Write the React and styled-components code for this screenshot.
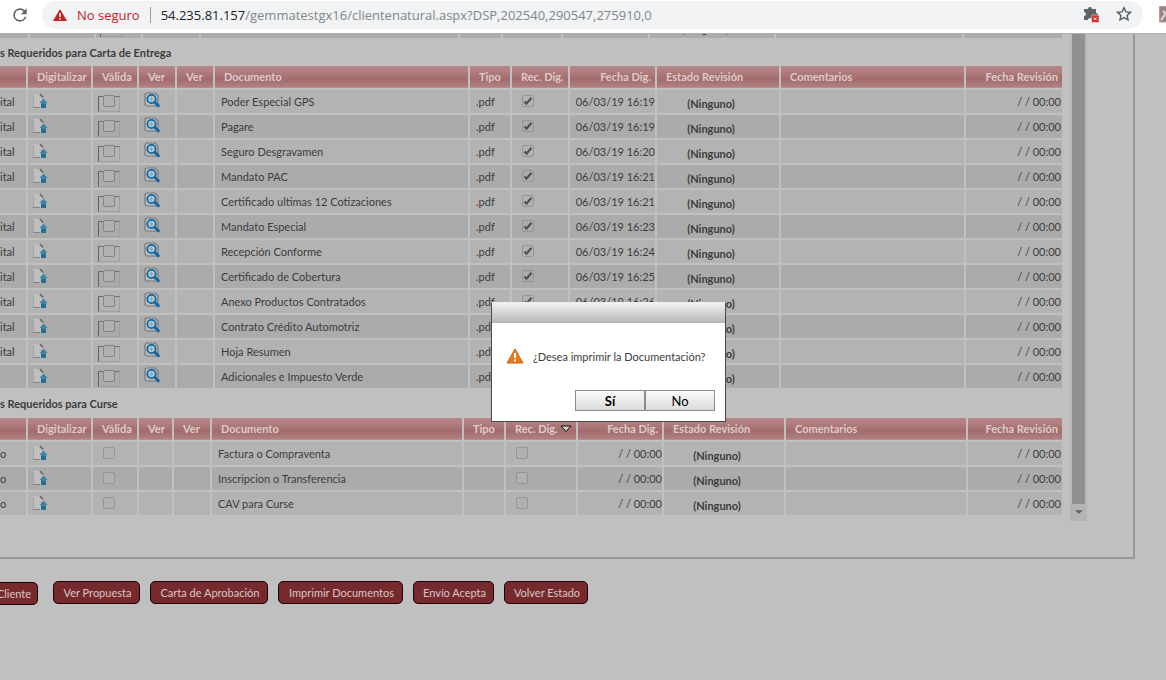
import React from 'react';
import styled, { createGlobalStyle } from 'styled-components';

const Global = createGlobalStyle`
  * { box-sizing: border-box; }
  body { margin: 0; background: #c0c0c0; font-family: Lato, "Open Sans", sans-serif; font-size: 11px; color: #3c3c3c; }
  #root { min-height: 100vh; }
`;

const Shell = styled.div`
  position: relative;
  display: flex;
  flex-direction: column;
  min-height: 100vh;
  overflow: hidden;
`;

const BrowserBar = styled.header`
  display: flex;
  align-items: center;
  flex: none;
  height: 34px;
  padding: 0 0 4px 10px;
  background: #fff;
  border-bottom: 1px solid #b0b0b0;
  overflow: hidden;
  z-index: 1;
`;

const IconButton = styled.button`
  display: flex;
  flex: none;
  padding: 0;
  border: 0;
  background: none;
`;

const AddressBox = styled.div`
  display: flex;
  align-items: center;
  flex: 1;
  min-width: 0;
  height: 28px;
  margin: 0 16px 0 12px;
  padding: 0 11px;
  border-radius: 14px;
  background: #f1f3f4;
  font-family: "Open Sans", "Noto Sans", sans-serif;
  font-size: 13px;
  white-space: nowrap;
`;

const Warning = styled.span`
  margin-left: 10px;
  padding-right: 10px;
  border-right: 1px solid #9a9da0;
  line-height: 16px;
  color: #c5221f;
`;

const Address = styled.a`
  flex: 1;
  margin-left: 10px;
  color: #80868b;
  text-decoration: none;
  overflow: hidden;
  b { font-weight: 400; color: #202124; }
`;

const Tools = styled.div`
  display: flex;
  gap: 16px;
`;

const Panel = styled.main`
  display: flex;
  margin: -19px 31px 0 0;
  padding: 0 46px 36px 0;
  border: solid #989898;
  border-width: 0 2px 2px 0;
`;

const Lists = styled.div`
  flex: 1;
  min-width: 0;
  padding-bottom: 4px;
`;

const ScrollTrack = styled.div`
  display: flex;
  flex-direction: column;
  flex: none;
  width: 17px;
  margin-left: 8px;
  background: #b9b9b9;
`;

const Thumb = styled.div`
  flex: 1;
  margin: 0 2px;
  background: #909090;
`;

const ScrollDown = styled.button`
  display: flex;
  align-items: center;
  justify-content: center;
  height: 17px;
  padding: 0;
  border: 0;
  background: #b4b4b4;
`;

const Title = styled.h2`
  display: flex;
  align-items: center;
  margin: 0;
  height: ${p => p.$h}px;
  font-size: 11px;
  line-height: 16px;
  white-space: nowrap;
`;

const Grid = styled.table`
  width: 100%;
  table-layout: fixed;
  border-collapse: separate;
  border-spacing: 0;
`;

const Head = styled.th`
  height: 24px;
  padding: 0 4px 0 9px;
  border: solid #c0c0c0;
  border-width: 0 2px 2px 0;
  background: linear-gradient(#b58889 0%, #ab7676 40%, #a46b6b 60%, #b08080 95%, #b99b9b 100%);
  color: #dccccc;
  font-size: 11px;
  line-height: 20px;
  text-align: ${p => p.$align || 'left'};
  white-space: nowrap;
  &:last-child { border-right: 0; }
`;

const Row = styled.tr`
  background: ${p => (p.$dark ? '#ababab' : '#b3b3b3')};
`;

const Cell = styled.td`
  height: 25px;
  padding: ${p => p.$pad || '0 0 0 6px'};
  border: solid #c0c0c0;
  border-width: 0 2px 2px 0;
  line-height: 16px;
  text-align: ${p => p.$align || 'left'};
  vertical-align: ${p => p.$v || 'middle'};
  font-weight: ${p => (p.$bold ? 700 : 400)};
  white-space: nowrap;
  overflow: hidden;
  &:last-child { border-right: 0; }
`;

const Tick = styled.input`
  appearance: none;
  display: block;
  width: 12px;
  height: 12px;
  margin: 0;
  border: 1px solid #959595;
  border-radius: 2px;
  background: ${p => (p.checked
    ? `url("data:image/svg+xml,%3Csvg xmlns='http://www.w3.org/2000/svg' viewBox='0 0 10 10'%3E%3Cpath d='M1.5 5.5l2 2.2 5-6' fill='none' stroke='%23505050' stroke-width='2.2'/%3E%3C/svg%3E")`
    : '#b1b1b1')};
`;

const Frame = styled.span`
  display: flex;
  justify-content: center;
  width: 22px;
  height: 16px;
  border: 1px solid #a0a0a0;
  border-left-color: #606060;
  border-top-color: #707070;
  input {
    margin-top: -2px;
    border-color: #858585;
  }
`;

const Actions = styled.nav`
  display: flex;
  gap: 10px;
  padding-top: 22px;
`;

const Action = styled.button`
  flex: none;
  width: ${p => p.$w}px;
  height: 23px;
  padding: 0 0 0 2px;
  border: 1px solid #1c0508;
  border-radius: 5px;
  background: #762a2d;
  color: #d8c6c6;
  font: inherit;
  line-height: 20px;
  white-space: nowrap;
  &:first-child { margin: 1px 5px 0 -12px; }
`;

const Dialog = styled.section`
  position: absolute;
  top: 302px;
  left: calc(50% - 92px);
  width: 235px;
  height: 120px;
  border: 1px solid #4a4a4a;
  border-top-color: #eee;
  background: #fff;
`;

const DialogBar = styled.div`
  height: 20px;
  background: linear-gradient(#f2f2f2, #b6b6b6);
`;

const Message = styled.p`
  display: flex;
  align-items: center;
  gap: 9px;
  margin: 22px 0 0 14px;
  height: 22px;
  white-space: nowrap;
`;

const Choices = styled.div`
  display: flex;
  justify-content: flex-end;
  margin: 23px 10px 0 0;
`;

const Choice = styled.button`
  width: 70px;
  height: 21px;
  padding: 0;
  border: 1px solid #8c8c8c;
  background: linear-gradient(#fafafa, #dcdcdc);
  font: inherit;
  font-size: 13px;
  font-weight: ${p => (p.$main ? 700 : 400)};
  line-height: 18px;
  color: #000;
`;

const Upload = () => (
  <svg width="16" height="16" viewBox="0 0 16 16" aria-label="Digitalizar">
    <path d="M0 1h7l3 4v10H0z" fill="#bfbfbf" />
    <path d="M0 14.500h7" stroke="#858585" />
    <path d="M0.500 2v12" stroke="#a6a6a6" />
    <path d="M7 1l3 3.500" stroke="#6a6a6a" strokeWidth="1.800" />
    <path d="M10.500 5.500l4 4.500h-1.500v5h-5v-5H6.500z" fill="#3d86a4" />
    <path d="M8 11h5v4H8z" fill="#246f92" />
  </svg>
);

const Search = () => (
  <svg width="16" height="16" viewBox="0 0 16 16" aria-label="Ver">
    <path d="M1 3a2 2 0 012-2h8l3 3v10H3a2 2 0 01-2-2z" fill="#b4bcc0" stroke="#777" strokeWidth="1.200" />
    <circle cx="7.500" cy="7" r="4.200" fill="#b0cad6" stroke="#1467a0" strokeWidth="1.800" />
    <path d="M7.500 4.800v4.400M5.300 7h4.400" stroke="#7fa6b8" />
    <path d="M10.800 10.300l3.500 3.500" stroke="#1467a0" strokeWidth="3" strokeLinecap="round" />
  </svg>
);

const SortArrow = () => (
  <svg width="12" height="8" viewBox="0 0 12 8"><path d="M1 1h10L6 6.500z" fill="#ccc" stroke="#111" /></svg>
);

const heads = ['', 'Digitalizar', 'Válida', 'Ver', 'Ver', 'Documento', 'Tipo', 'Rec. Dig.', 'Fecha Dig.', 'Estado Revisión', 'Comentarios', 'Fecha Revisión'];
const widthsTop = [30, 66, 47, 58, 259, 43, 60, 87, 126, null, 98];
const widthsA = [28, 65, 46, 38, 38, 255, 42, 58, 87, 124, null, 96];
const widthsB = [28, 65, 46, 35, 38, 252, 42, 72, 86, 122, null, 94];

const entrega = [
  ['ital', 'Poder Especial GPS', '16:19'],
  ['ital', 'Pagare', '16:19'],
  ['ital', 'Seguro Desgravamen', '16:20'],
  ['ital', 'Mandato PAC', '16:21'],
  ['', 'Certificado ultimas 12 Cotizaciones', '16:21'],
  ['ital', 'Mandato Especial', '16:23'],
  ['ital', 'Recepción Conforme', '16:24'],
  ['ital', 'Certificado de Cobertura', '16:25'],
  ['ital', 'Anexo Productos Contratados', '16:26'],
  ['ital', 'Contrato Crédito Automotriz', '16:26'],
  ['ital', 'Hoja Resumen', '16:27'],
  ['', 'Adicionales e Impuesto Verde', '16:27'],
].map(([kind, doc, time]) => ({ kind, doc, type: '.pdf', date: `06/03/19 ${time}`, received: true }));

const curse = ['Factura o Compraventa', 'Inscripcion o Transferencia', 'CAV para Curse']
  .map(doc => ({ kind: 'o', doc, type: '', date: '/ / 00:00', received: false }));

const Columns = ({ widths }) => (
  <colgroup>{widths.map((w, i) => <col key={i} width={w === null ? undefined : w} />)}</colgroup>
);

function DocumentGrid({ widths, rows, sorted }) {
  return (
    <Grid>
      <Columns widths={widths} />
      <thead>
        <tr>
          {heads.map((h, i) => (
            <Head key={i} $align={i === 8 || i === 11 ? 'right' : 'left'}>
              {h}{sorted && i === 7 && <> <SortArrow /></>}
            </Head>
          ))}
        </tr>
      </thead>
      <tbody>
        {rows.map((r, i) => (
          <Row key={r.doc} $dark={i % 2 === 1}>
            <Cell $pad="0">{r.kind}</Cell>
            <Cell $pad="3px 0 0 5px" $v="top"><Upload /></Cell>
            <Cell $pad={r.received ? '6px 0 0 5px' : '5px 0 0 10px'} $v="top">
              {r.received
                ? <Frame><Tick type="checkbox" disabled aria-label={`Válida ${r.doc}`} /></Frame>
                : <Tick type="checkbox" disabled aria-label={`Válida ${r.doc}`} />}
            </Cell>
            <Cell $pad="2px 0 0 5px" $v="top">{r.received && <Search />}</Cell>
            <Cell />
            <Cell>{r.doc}</Cell>
            <Cell>{r.type}</Cell>
            <Cell $pad="5px 0 0 10px" $v="top">
              <Tick type="checkbox" disabled checked={r.received} readOnly aria-label={`Rec. Dig. ${r.doc}`} />
            </Cell>
            <Cell $pad="0" $align="right">{r.date}</Cell>
            <Cell $pad="5px 14px 0 0" $align="center" $bold>(Ninguno)</Cell>
            <Cell />
            <Cell $pad="0 1px 0 0" $align="right">/ / 00:00</Cell>
          </Row>
        ))}
      </tbody>
    </Grid>
  );
}

export default function App() {
  return (
    <>
      <Global />
      <Shell>
        <BrowserBar>
          <IconButton aria-label="Recargar">
            <svg width="20" height="20" viewBox="0 0 24 24"><path fill="#5f6368" d="M17.650 6.350A7.960 7.960 0 0012 4a8 8 0 107.730 10h-2.080A6 6 0 1112 6c1.660 0 3.140.69 4.220 1.780L13 11h7V4z" /></svg>
          </IconButton>
          <AddressBox>
            <svg width="14" height="14" viewBox="0 0 14 14"><path fill="#c5221f" d="M7 1l7 12H0z" /><path stroke="#fff" strokeWidth="1.500" d="M7 5v4M7 10v1.500" /></svg>
            <Warning>No seguro</Warning>
            <Address href="#"><b>54.235.81.157</b>/gemmatestgx16/clientenatural.aspx?DSP,202540,290547,275910,0</Address>
            <Tools>
              <IconButton aria-label="Extensiones">
                <svg width="17" height="17" viewBox="0 0 17 17">
                  <path fill="#5f6368" d="M1 3h4a2 2 0 114 0h4v4a2 2 0 010 4v3H9a2 2 0 00-4 0H1v-4a2 2 0 000-4z" />
                  <rect x="8.500" y="9" width="7.500" height="7.500" rx="1" fill="#d0312d" stroke="#f1f3f4" strokeWidth=".5" /><path d="M11 11.500l2.500 2.500m0-2.500L11 14" stroke="#fff" />
                </svg>
              </IconButton>
              <IconButton aria-label="Favorito">
                <svg width="16" height="16" viewBox="0 0 16 16"><path fill="none" stroke="#5f6368" strokeWidth="1.500" d="M8 1.800l1.900 4.100 4.500.5-3.300 3 .9 4.400L8 11.600l-4 2.200.9-4.400-3.300-3 4.500-.5z" /></svg>
              </IconButton>
            </Tools>
          </AddressBox>
          <svg width="7" height="17" viewBox="0 0 7 17"><path fill="#8f8886" stroke="#cf8f8f" d="M.5.500h8v15.500h-8z" /><path d="M2 14l5-7M4 5l3 3" stroke="#e3d8d8" strokeWidth="2" /></svg>
        </BrowserBar>
        <Panel>
          <Lists>
            <Grid>
              <Columns widths={widthsTop} />
              <tbody>
                <Row $dark>
                  <Cell /><Cell />
                  <Cell $pad="6px 0 0 4px" $v="top"><Frame /></Cell>
                  <Cell /><Cell /><Cell /><Cell /><Cell />
                  <Cell $pad="5px 14px 0 0" $align="center" $bold>(Ninguno)</Cell>
                  <Cell /><Cell />
                </Row>
              </tbody>
            </Grid>
            <Title $h={26}>s Requeridos para Carta de Entrega</Title>
            <DocumentGrid widths={widthsA} rows={entrega} />
            <Title $h={28}>s Requeridos para Curse</Title>
            <DocumentGrid widths={widthsB} rows={curse} sorted />
          </Lists>
          <ScrollTrack>
            <Thumb />
            <ScrollDown aria-label="Bajar"><svg width="8" height="5" viewBox="0 0 8 5"><path fill="#6a6a6a" d="M0 0h8L4 4z" /></svg></ScrollDown>
          </ScrollTrack>
        </Panel>
        <Actions>
          <Action $w={50}>Cliente</Action>
          <Action $w={87}>Ver Propuesta</Action>
          <Action $w={118}>Carta de Aprobación</Action>
          <Action $w={125}>Imprimir Documentos</Action>
          <Action $w={81}>Envío Acepta</Action>
          <Action $w={84}>Volver Estado</Action>
        </Actions>
        <Dialog role="dialog" aria-label="Confirmación">
          <DialogBar />
          <Message>
            <svg width="18" height="16" viewBox="0 0 18 16"><path d="M9 1l8 14H1z" fill="#ec7a1c" stroke="#c95f14" strokeLinejoin="round" /><path d="M9 5v5M9 11.500v2" stroke="#fff" strokeWidth="2" /></svg>
            ¿Desea imprimir la Documentación?
          </Message>
          <Choices>
            <Choice $main>Sí</Choice>
            <Choice>No</Choice>
          </Choices>
        </Dialog>
      </Shell>
    </>
  );
}
